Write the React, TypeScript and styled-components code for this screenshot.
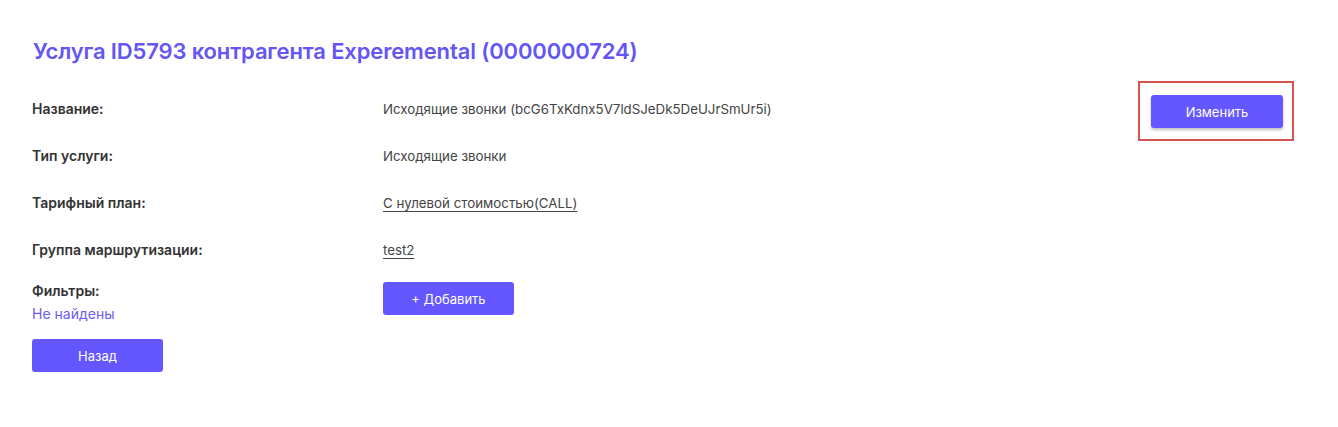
import React, { FC } from "react";
import styled, { createGlobalStyle } from "styled-components";

const GlobalStyle = createGlobalStyle`
  body {
    margin: 0;
    background: #fff;
    font-family: Inter, "Noto Sans", sans-serif;
  }
`;

const Page = styled.div`
  padding: 36px 44px 0 32px;
`;

const Title = styled.h1`
  margin: 0 0 15px 1px;
  font-size: 22px;
  line-height: 30px;
  font-weight: 600;
  color: #6455f5;
  letter-spacing: -0.15px;
`;

const Body = styled.div`
  display: flex;
  justify-content: space-between;
  align-items: flex-start;
`;

const Details = styled.div`
  padding-top: 6px;
`;

const Table = styled.div`
  display: grid;
  grid-template-columns: 351px auto;
  grid-auto-rows: 47px;
`;

const Label = styled.div`
  font-size: 14px;
  line-height: 20px;
  font-weight: 600;
  color: #333;
  padding-top: 12px;
`;

const Value = styled.div<{ $link?: boolean }>`
  font-size: 13.3px;
  line-height: 20px;
  color: #444;
  padding-top: 12px;
  text-decoration: ${(p) => (p.$link ? "underline" : "none")};
  text-underline-offset: 3px;
`;

const FilterCell = styled.div`
  padding-top: 6px;
`;

const FilterLabel = styled(Label)`
  padding-top: 0;
`;

const Empty = styled.div`
  margin-top: 3px;
  font-size: 14px;
  line-height: 20px;
  color: #6a5cf7;
`;

const Button = styled.button`
  display: block;
  width: 131px;
  height: 33px;
  border: none;
  border-radius: 3px;
  background: #6457ff;
  color: #fff;
  font-family: inherit;
  font-size: 13px;
  cursor: pointer;
`;

const AddCell = styled.div`
  padding-top: 7px;
`;

const BackButton = styled(Button)`
  margin-top: 17px;
`;

const Highlight = styled.div`
  padding: 12px 9px 11px 11px;
  border: 2px solid #d9534f;
`;

const EditButton = styled(Button)`
  width: 132px;
  box-shadow: 0 2px 3px rgba(0, 0, 0, 0.25);
`;

const App: FC = () => {
  return (
    <Page>
      <GlobalStyle />
      <Title>Услуга ID5793 контрагента Experemental (0000000724)</Title>
      <Body>
        <Details>
          <Table>
            <Label>Название:</Label>
            <Value>Исходящие звонки (bcG6TxKdnx5V7ldSJeDk5DeUJrSmUr5i)</Value>
            <Label>Тип услуги:</Label>
            <Value>Исходящие звонки</Value>
            <Label>Тарифный план:</Label>
            <Value $link>С нулевой стоимостью(CALL)</Value>
            <Label>Группа маршрутизации:</Label>
            <Value $link>test2</Value>
            <FilterCell>
              <FilterLabel>Фильтры:</FilterLabel>
              <Empty>Не найдены</Empty>
            </FilterCell>
            <AddCell>
              <Button>+ Добавить</Button>
            </AddCell>
          </Table>
          <BackButton>Назад</BackButton>
        </Details>
        <Highlight>
          <EditButton>Изменить</EditButton>
        </Highlight>
      </Body>
    </Page>
  );
};

export default App;
